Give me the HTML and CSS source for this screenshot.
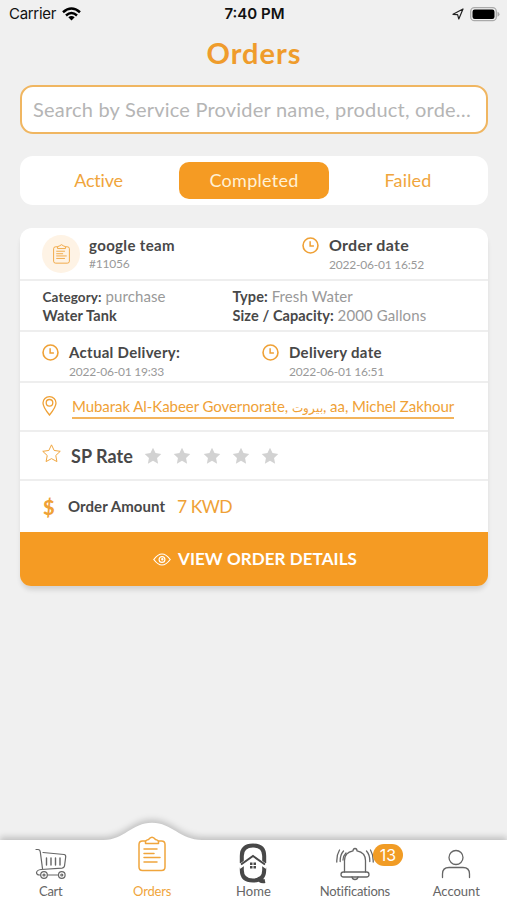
FILE: index.html
```
<!DOCTYPE html>
<html lang="en">
<head>
<meta charset="utf-8">
<title>Orders</title>
<link rel="stylesheet" href="styles.css">
</head>
<body>
<svg class="defs" aria-hidden="true">
  <symbol id="clock" viewBox="0 0 18 18"><circle cx="9" cy="9" r="7.900" fill="none" stroke="currentColor" stroke-width="1.700"/><path d="M8.600 4.600v5H12.600" fill="none" stroke="currentColor" stroke-width="1.600"/></symbol>
  <symbol id="star" viewBox="0 0 20 20"><path d="M10 .9l2.800 5.900 6.400.9-4.700 4.400 1.200 6.400-5.700-3.100-5.700 3.100 1.200-6.400L.8 7.700l6.400-.9z"/></symbol>
  <symbol id="clipboard" viewBox="0 0 28 36"><g fill="none" stroke="currentColor" stroke-width="1.500" stroke-linecap="round" stroke-linejoin="round"><path d="M7.500 5H4.500Q1 5 1 8.500V31Q1 34.500 4.500 34.500H23.500Q27 34.500 27 31V8.500Q27 5 23.500 5H20.500M7.500 7.500V5.500Q8 4 10.500 3.500Q14-1 17.500 3.500Q20 4 20.500 5.500V7.500Z"/><path d="M6 13H19M6 17.500H16M6 21.500H22M6 26H19"/></g></symbol>
</svg>
<header class="status">
  <div class="status-side"><span class="carrier">Carrier</span>
    <svg width="19" height="14" viewBox="0 0 19 14" fill="none" stroke="#000" stroke-width="2.500"><path d="M1 5.300Q9.500-2.300 18 5.300"/><path d="M4 8.500Q9.500 3.500 15 8.500"/><path d="M9.500 13.500L6.300 10.300Q9.500 7.600 12.700 10.300z" fill="#000" stroke="none"/></svg>
  </div>
  <span class="time">7:40 PM</span>
  <div class="status-side status-right">
    <svg width="12" height="12" viewBox="0 0 12 12"><path d="M1 6.300L11 1L6.800 11L5.600 6.600z" fill="none" stroke="#222" stroke-width="1.200" stroke-linejoin="round"/></svg>
    <svg width="30" height="15" viewBox="0 0 30 15"><rect x=".7" y=".7" width="25.600" height="13" rx="3.800" fill="none" stroke="#aaa" stroke-width="1.300"/><rect x="2.500" y="2.500" width="22" height="9.500" rx="2.200"/><path d="M27.500 4.800Q29.500 5.500 29.500 7.300T27.500 9.800z" fill="#aaa"/></svg>
  </div>
</header>
<main class="page">
  <h1 class="title">Orders</h1>
  <div class="search">Search by Service Provider name, product, orde…</div>
  <nav class="tabs">
    <span class="tab tab-first">Active</span><span class="tab tab-on">Completed</span><span class="tab tab-last">Failed</span>
  </nav>
  <section class="card">
    <div class="row head">
      <div class="avatar"><svg width="17" height="20" viewBox="0 0 28 36" preserveAspectRatio="none"><use href="#clipboard"/></svg></div>
      <div class="head-who"><div class="name">google team</div><div class="num id">#11056</div></div>
      <svg class="clock" width="17" height="17"><use href="#clock"/></svg>
      <div><div class="label-lg">Order date</div><div class="num">2022-06-01 16:52</div></div>
    </div>
    <div class="row info">
      <div><div class="line"><b class="cat">Category:</b> <span class="val">purchase</span></div><div class="line"><b>Water Tank</b></div></div>
      <div><div class="line"><b>Type:</b> <span class="val">Fresh Water</span></div><div class="line"><b>Size / Capacity:</b> <span class="val">2000 Gallons</span></div></div>
    </div>
    <div class="row dates">
      <div class="date"><svg class="clock" width="17" height="17"><use href="#clock"/></svg><div><div class="label">Actual Delivery:</div><div class="num">2022-06-01 19:33</div></div></div>
      <div class="date"><svg class="clock" width="17" height="17"><use href="#clock"/></svg><div><div class="label">Delivery date</div><div class="num">2022-06-01 16:51</div></div></div>
    </div>
    <div class="row place">
      <svg width="15" height="20" viewBox="0 0 15 20" fill="none" stroke="currentColor" stroke-width="1.300"><path d="M7.500 19Q1 11 1 7A6.500 6.300 0 0 1 14 7Q14 11 7.500 19z"/><circle cx="7.500" cy="6.800" r="3.300"/></svg>
      <div class="address">Mubarak Al-Kabeer Governorate, <bdi class="arabic">بيروت</bdi>, aa, Michel Zakhour</div>
    </div>
    <div class="row rate">
      <svg class="star-line" width="19" height="19"><use href="#star"/></svg>
      <span class="rate-label">SP Rate</span>
      <div class="stars">
        <svg width="18" height="18"><use href="#star"/></svg><svg width="18" height="18"><use href="#star"/></svg><svg width="18" height="18"><use href="#star"/></svg><svg width="18" height="18"><use href="#star"/></svg><svg width="18" height="18"><use href="#star"/></svg>
      </div>
    </div>
    <div class="row amount">
      <span class="dollar">$</span><span class="amount-label">Order Amount</span><span class="price">7 KWD</span>
    </div>
    <div class="action">
      <svg width="18" height="13" viewBox="0 0 18 13" fill="none" stroke="#fff" stroke-width="1.200"><path d="M.8 6.500Q9-4.500 17.200 6.500Q9 17.500 .8 6.500z"/><circle cx="9" cy="6.500" r="2.900"/><circle cx="9.300" cy="6.200" r=".6"/></svg>
      <span class="action-text">VIEW ORDER DETAILS</span>
    </div>
  </section>
</main>
<footer class="bar">
  <svg class="bar-shape" width="507" height="90" viewBox="0 0 507 90"><path d="M-20 30H104C124 30 132 12.800 152 12.800S180 30 202 30H527V110H-20z" fill="#fff"/></svg>
  <div class="item"><div class="icon">
    <svg width="32" height="32" viewBox="0 0 32 32" fill="none" stroke="#666" stroke-width="1.200" stroke-linecap="round" stroke-linejoin="round"><path d="M1 1.500H3Q5 1.500 5.300 4L7.500 20.500M8 4.500L29 6.500Q31 6.800 30.700 9L29.500 18Q29 20 27 20.200L6 21.500Q2 22 1.500 24.500Q1.500 27 4.500 27H5.500M12.500 27H23"/><path d="M11.500 10V17M16 10V17M20.500 10V17M25 10V17" stroke-width="1.400"/><circle cx="9" cy="27" r="3.300"/><circle cx="9" cy="27" r="1"/><circle cx="26.800" cy="27" r="3.300"/><circle cx="26.800" cy="27" r="1"/></svg>
  </div><span class="cap cap-cart">Cart</span></div>
  <div class="item active"><div class="icon icon-up"><svg width="28" height="36"><use href="#clipboard"/></svg></div><span class="cap">Orders</span></div>
  <div class="item"><div class="icon">
    <svg class="home" width="30" height="41" viewBox="0 0 30 41" fill="none" stroke="#484848"><path d="M3.800 20V13Q3.800 2.500 15 2.500T26.200 13V20M3.800 23V27Q3.800 37.500 15 37.500T26.200 27V23M19.500 34.500Q22 39 27 38" stroke-width="4"/><path d="M1 24L15 14L29 24" stroke="#fff" stroke-width="4.500"/><path d="M3 21.500L15 13L27 21.500" stroke-width="2"/><path d="M12 19.500H14.500V22H12zM15.500 19.500H18V22H15.500zM12 23H14.500V25.500H12zM15.500 23H18V25.500H15.500z" fill="#484848" stroke="none"/></svg>
  </div><span class="cap cap-home">Home</span></div>
  <div class="item"><div class="icon">
    <svg width="38" height="34" viewBox="0 0 38 34" fill="none" stroke="#666" stroke-width="1.300" stroke-linecap="round"><path d="M8.500 25V13.500Q8.500 5.500 17 3.800Q17 1.500 19 1.500T21 3.800Q29.500 5.500 29.500 13.500V25M16 30Q16.500 32.500 19 32.500T22 30"/><rect x="5" y="25" width="28" height="5" rx="2.500"/><path d="M7.500 4Q4 8 4.200 14.500M3.500 3Q.5 8 .8 15M10 6Q7 9 7 13M30.500 4Q34 8 33.800 14.500M34.500 3Q37.500 8 37.200 15"/></svg>
    <span class="badge">13</span>
  </div><span class="cap cap-note">Notifications</span></div>
  <div class="item"><div class="icon">
    <svg width="30" height="30" viewBox="0 0 30 30" fill="none" stroke="#666" stroke-width="1.300" stroke-linecap="round"><circle cx="15" cy="8.500" r="7"/><path d="M1.500 28.500V25Q1.500 18.500 8 18.500H22Q28.500 18.500 28.500 25V28.500"/></svg>
  </div><span class="cap cap-acc">Account</span></div>
</footer>
</body>
</html>
```
FILE: styles.css
```
* { box-sizing: border-box; }
body {
  margin: 0;
  width: 507px;
  height: 900px;
  overflow: hidden;
  display: flex;
  flex-direction: column;
  background: #f0f0f0;
  color: #484848;
  font-family: Lato, "Noto Sans", sans-serif;
}
svg { display: block; flex: none; }
.defs { position: absolute; width: 0; height: 0; }

.status {
  height: 28px;
  padding: 0 7px 0 9px;
  display: grid;
  grid-template-columns: 1fr auto 1fr;
  align-items: center;
  font: 500 15px/28px Inter, sans-serif;
  color: #111;
}
.status-side { display: flex; align-items: center; gap: 6px; }
.status-right { justify-content: flex-end; }
.carrier { font-weight: 400; letter-spacing: -.31px; }
.time { font-weight: 600; }

.page { flex: 1; padding: 0 19px 0 20px; }
.title {
  margin: 0;
  height: 57px;
  text-align: center;
  font-size: 29px;
  line-height: 49px;
  letter-spacing: .99px;
  color: #ef9c2c;
}
.search {
  height: 49px;
  padding: 0 11px;
  border: 2px solid #f0b661;
  border-radius: 13px;
  background: #fff;
  color: #b5b5b5;
  font-size: 20px;
  line-height: 45px;
  letter-spacing: .21px;
  white-space: nowrap;
}
.tabs {
  margin-top: 22px;
  height: 49px;
  padding: 6px 3px;
  display: grid;
  grid-template-columns: 156px 150px 1fr;
  border-radius: 13px;
  background: #fff;
}
.tab {
  text-align: center;
  font-size: 18px;
  line-height: 37px;
  color: #f0a53c;
}
.tab-first { letter-spacing: -.2px; padding-right: 5px; }
.tab-on { background: #f59b23; color: #fff1d6; border-radius: 10px; letter-spacing: .26px; }
.tab-last { letter-spacing: .17px; padding-left: 2px; }

.card {
  margin-top: 23px;
  border-radius: 12px;
  background: #fff;
  box-shadow: 0 5px 5px -1px rgba(0, 0, 0, .12);
}
.row { border-bottom: 2px solid #eee; padding-left: 22px; display: flex; }
.clock, .place, .star-line, .dollar { color: #efa136; }

.head { height: 53px; }
.avatar {
  width: 38px;
  height: 38px;
  margin-top: 7px;
  display: flex;
  align-items: center;
  justify-content: center;
  border-radius: 50%;
  background: #fef3e5;
  color: #efa136;
}
.head-who { width: 222px; padding: 7px 0 0 9px; }
.head .clock { margin: 9px 10px 0 0; }
.name { font-weight: 700; font-size: 15px; line-height: 20px; letter-spacing: .37px; }
.label-lg { margin-top: 6px; font-weight: 700; font-size: 16px; line-height: 22px; letter-spacing: .28px; }
.label { font-weight: 700; font-size: 15px; line-height: 20px; letter-spacing: .3px; }
.num { font-size: 12px; line-height: 18px; letter-spacing: -.22px; color: #999; white-space: nowrap; }
.id { line-height: 18px; }

.info { height: 51px; padding: 6px 0 0 22.500px; display: grid; grid-template-columns: 190px 1fr; }
.line { height: 19px; font-size: 14.500px; line-height: 19px; letter-spacing: .1px; white-space: nowrap; }
.cat { font-size: 13.500px; }
.val { font-size: 15px; color: #999; }

.dates { height: 51px; padding-top: 10px; }
.date { display: flex; gap: 10px; width: 220px; }
.date .clock { margin-top: 2px; }
.date .num { line-height: 20px; }

.place { height: 49px; padding-top: 13px; gap: 15px; }
.address {
  height: 23px;
  width: 382px;
  border-bottom: 2px solid #f3b45c;
  font-size: 15px;
  line-height: 21px;
  letter-spacing: -.06px;
  white-space: nowrap;
}
.arabic { font-size: 12px; letter-spacing: 0; }

.rate { height: 49px; align-items: center; }
.star-line { fill: none; stroke: #efa136; stroke-width: 1px; margin-top: -4px; }
.rate-label { width: 73px; margin: 1px 0 0 10px; font-weight: 700; font-size: 18px; letter-spacing: .06px; }
.stars { display: flex; gap: 11.300px; fill: #d2d2d2; }

.amount { height: 51px; align-items: center; border-bottom: 0; }
.dollar { width: 26px; padding-left: 1px; font-weight: 900; font-size: 20px; line-height: 48px; }
.amount-label { width: 109px; font-weight: 700; font-size: 15px; line-height: 49px; letter-spacing: .06px; }
.price { font-size: 17.500px; line-height: 49px; letter-spacing: -.5px; color: #efa136; }

.action {
  height: 54px;
  display: flex;
  align-items: center;
  justify-content: center;
  gap: 7px;
  padding-left: 2px;
  border-radius: 0 0 11px 11px;
  background: #f59b23;
  color: #fff;
  font-weight: 700;
  font-size: 17px;
  letter-spacing: .07px;
}
.action-text { padding-bottom: 2px; }

.bar {
  position: relative;
  height: 60px;
  display: grid;
  grid-template-columns: repeat(5, 1fr);
}
.bar-shape { position: absolute; left: 0; bottom: 0; filter: drop-shadow(0 -3px 3px rgba(0, 0, 0, .2)); }
.item { position: relative; display: flex; flex-direction: column; align-items: center; }
.icon { position: relative; height: 43px; display: flex; align-items: center; padding-top: 4px; }
.icon-up { margin-top: -7px; height: 50px; align-items: flex-start; padding-top: 3px; }
.active { color: #f0a53c; }
.cap { font-size: 13px; line-height: 16px; letter-spacing: -.21px; color: #666; }
.active .cap { color: #f0a53c; }
.cap-cart { letter-spacing: -.3px; }
.cap-home { letter-spacing: .09px; }
.cap-acc { letter-spacing: 0; }
.badge {
  position: absolute;
  left: 37px;
  top: 4px;
  width: 30px;
  height: 22px;
  border-radius: 11px;
  background: #f19c25;
  color: #fff;
  text-align: center;
  font: 400 16px/22px Inter, sans-serif;
}
```
